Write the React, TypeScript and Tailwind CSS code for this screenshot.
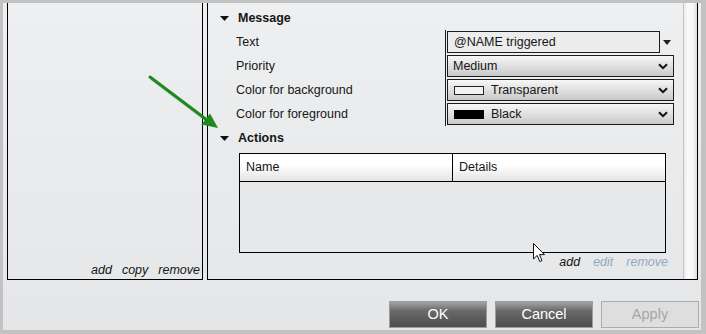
import React from "react";

const labels = [
	"Text",
	"Priority",
	"Color for background",
	"Color for foreground",
];

function Chevron() {
	return (
		<svg width="10" height="7" viewBox="0 0 10 7" className="shrink-0">
			<path d="M1 1.2 L5 5.2 L9 1.2" fill="none" stroke="#111" strokeWidth="2" />
		</svg>
	);
}

function Triangle() {
	return (
		<svg width="9" height="5" viewBox="0 0 9 5" className="shrink-0">
			<path d="M0 0 H9 L4.5 5 Z" fill="#111" />
		</svg>
	);
}

function Combo({ children }: { children: React.ReactNode }) {
	return (
		<div className="flex h-[22px] w-[227px] items-center justify-between border border-[#1c1c1c] bg-[linear-gradient(#f7f7f7,#e2e2e2_45%,#c9c9c9)] pl-[5px] pr-[5px]">
			<div className="flex items-center">{children}</div>
			<Chevron />
		</div>
	);
}

function SectionHeader({ title }: { title: string }) {
	return (
		<div className="flex h-[24px] items-center pl-[12px]">
			<Triangle />
			<span className="ml-[9px] text-[12.5px] font-bold text-[#161616]">
				{title}
			</span>
		</div>
	);
}

export default function App() {
	return (
		<div
			className="relative h-[334px] w-[706px] bg-[#c2c2c2] pb-[4px] pl-[3px] pr-[5px] pt-[3px] text-[#161616]"
			style={{ fontFamily: '"Liberation Sans", Arial, sans-serif' }}
		>
			<div className="flex h-full flex-col bg-[linear-gradient(#eeeff0,#e5e6e7)]">
				<div className="flex h-[277px] pl-[4px]">
					{/* left list panel */}
					<section className="flex w-[196px] flex-col justify-end border-x border-b border-black pb-[2px] pr-[2px]">
						<div className="flex h-[14px] items-center justify-end gap-[10px] text-[12.5px] italic text-[#161616]">
							<span>add</span>
							<span>copy</span>
							<span>remove</span>
						</div>
					</section>

					{/* right editor panel */}
					<section className="ml-[4px] flex w-[491px] border-x border-b border-black">
						<div className="flex-1 pt-[3px]">
							<SectionHeader title="Message" />
							<div className="flex pl-[28px] text-[12.5px]">
								<div className="flex w-[209px] flex-col">
									{labels.map((label) => (
										<div key={label} className="flex h-[24px] items-center">
											{label}
										</div>
									))}
								</div>
								<div className="flex flex-col border-l border-[#1c1c1c] pl-[1px]">
									<div className="flex h-[24px] items-center">
										<div className="flex h-[22px] w-[213px] items-center border border-[#1c1c1c] bg-[#ececec] pl-[6px]">
											@NAME triggered
										</div>
										<span className="ml-[3px]">
											<svg width="8" height="5" viewBox="0 0 8 5">
												<path d="M0 0 H8 L4 5 Z" fill="#222" />
											</svg>
										</span>
									</div>
									<div className="flex h-[24px] items-center">
										<Combo>Medium</Combo>
									</div>
									<div className="flex h-[24px] items-center">
										<Combo>
											<span className="ml-[1px] h-[9px] w-[30px] border border-[#222] bg-[#f2f2f2]" />
											<span className="ml-[7px]">Transparent</span>
										</Combo>
									</div>
									<div className="flex h-[24px] items-center">
										<Combo>
											<span className="ml-[1px] h-[9px] w-[30px] bg-black" />
											<span className="ml-[7px]">Black</span>
										</Combo>
									</div>
								</div>
							</div>

							<SectionHeader title="Actions" />
							<div className="ml-[31px] mt-[3px] flex h-[100px] w-[427px] flex-col border border-black text-[12.5px]">
								<div className="flex h-[28px] border-b border-black bg-[linear-gradient(#ffffff,#ffffff_40%,#e4e4e4)]">
									<div className="flex w-[213px] items-center border-r border-black pl-[6px]">
										Name
									</div>
									<div className="flex items-center pl-[6px]">Details</div>
								</div>
								<div className="flex-1 bg-[#e7e8e9]" />
							</div>
							<div className="mr-[15px] mt-[2px] flex h-[14px] items-center justify-end gap-[13px] text-[12.5px] italic">
								<span className="text-[#161616]">add</span>
								<span className="text-[#93a9c3]">edit</span>
								<span className="text-[#93a9c3]">remove</span>
							</div>
						</div>
						<div className="w-[14px] border-l border-[#c4c4c4] bg-[linear-gradient(to_right,#eaeaea,#fbfbfb_30%,#f6f6f6_70%,#dcdcdc)]" />
					</section>
				</div>

				{/* dialog buttons */}
				<div className="flex flex-1 items-start justify-end gap-[8px] pr-[2px] pt-[21px] text-[14.5px]">
					<button className="flex h-[27px] w-[98px] items-center justify-center border border-[#9c9c9c] bg-[linear-gradient(#a4a4a4,#6a6a6a_35%,#4c4c4c)] text-white">
						OK
					</button>
					<button className="flex h-[27px] w-[98px] items-center justify-center border border-[#9c9c9c] bg-[linear-gradient(#a4a4a4,#6a6a6a_35%,#4c4c4c)] text-white">
						Cancel
					</button>
					<button className="flex h-[27px] w-[98px] items-center justify-center border border-[#acacac] bg-[#dedede] text-[#a6a6a6]">
						Apply
					</button>
				</div>
			</div>

			{/* annotation arrow */}
			<svg
				className="pointer-events-none absolute left-0 top-0"
				width="706"
				height="334"
				viewBox="0 0 706 334"
			>
				<line x1="150" y1="77" x2="207" y2="120" stroke="#9aa09a" strokeWidth="3" opacity="0.35" transform="translate(1.5 2)" />
				<line x1="150" y1="77" x2="207" y2="120" stroke="#1e8a1e" strokeWidth="3" strokeLinecap="round" />
				<path d="M218 128 L201.5 124.5 L210 113.5 Z" fill="#1e8a1e" />
			</svg>

			{/* mouse pointer */}
			<svg
				className="pointer-events-none absolute left-[533px] top-[243px]"
				width="13"
				height="20"
				viewBox="0 0 13 20"
			>
				<path
					d="M0.5 0.5 L0.5 16 L4.2 12.4 L6.8 18.6 L9 17.6 L6.5 11.6 L11.5 11.6 Z"
					fill="#ffffff"
					stroke="#111"
					strokeWidth="1"
					strokeLinejoin="round"
				/>
			</svg>
		</div>
	);
}
